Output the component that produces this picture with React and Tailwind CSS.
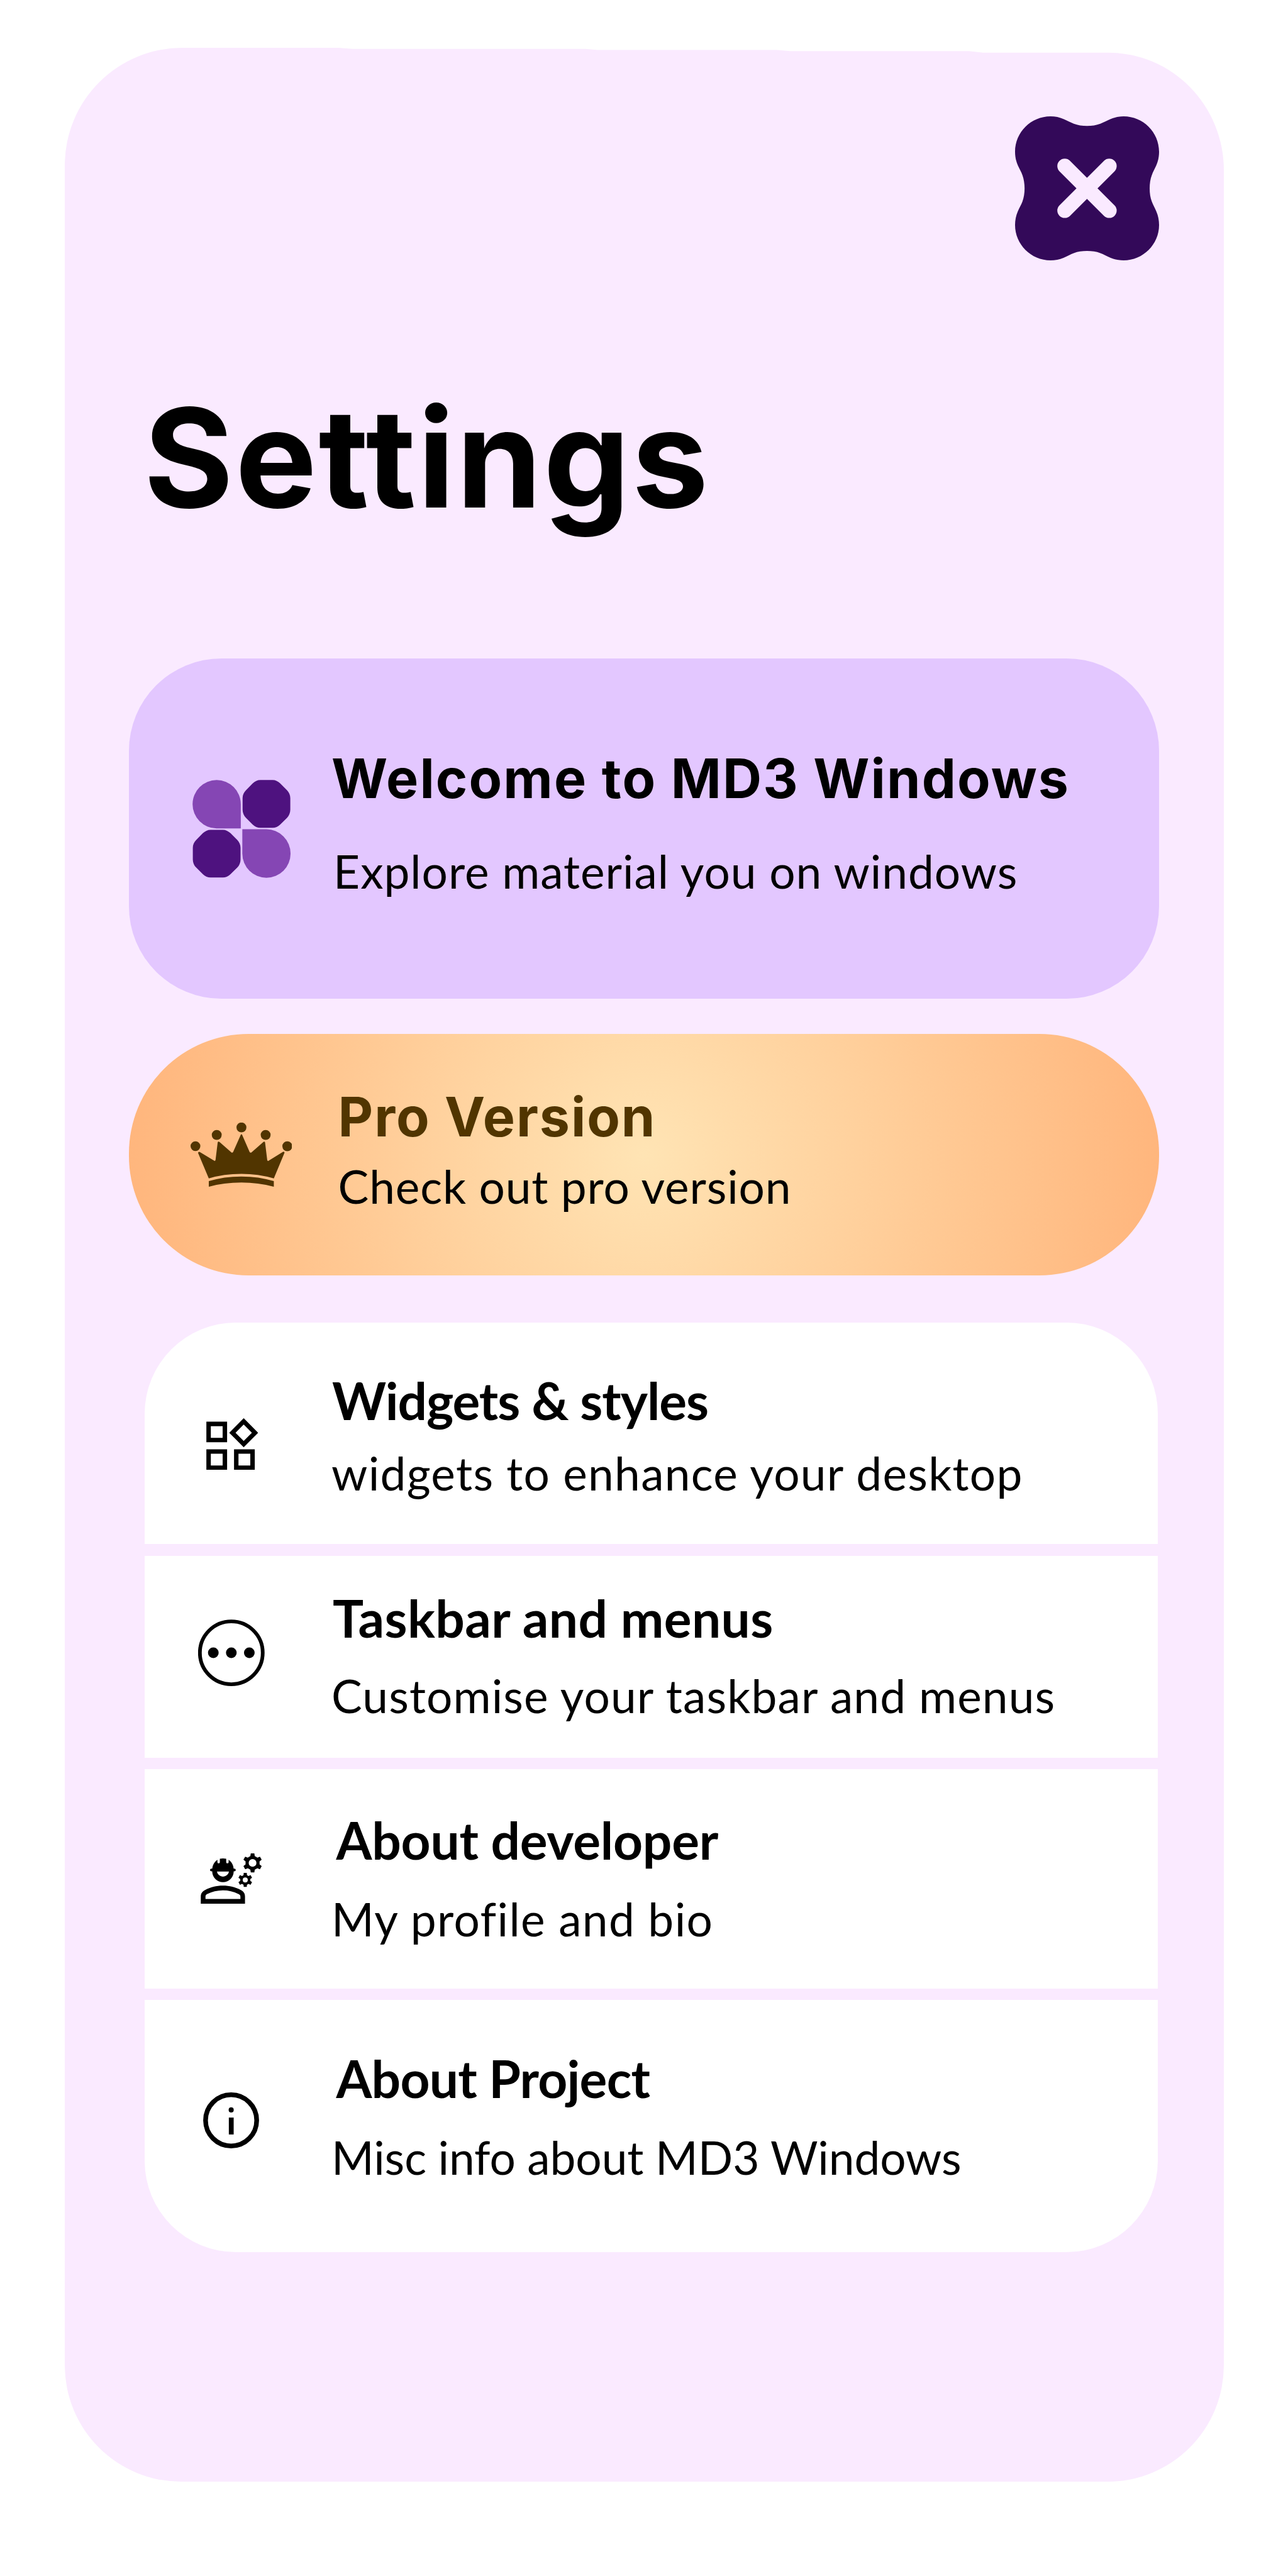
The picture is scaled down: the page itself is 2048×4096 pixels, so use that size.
import React from "react";

function CloseIcon() {
  return (
    <svg viewBox="181 162 1133 1133" className="block h-[229px] w-[229px]">
      <path
        fill="#330959"
        d="M181 440C181 287 307 162 460 162C497 162 532 169 562 183C592 196 618 209 643 220C675 232 710 237 747 237C785 237 820 232 852 220C877 209 903 196 933 183C963 169 998 162 1035 162C1188 162 1314 287 1314 440C1314 478 1307 513 1293 546C1280 575 1266 600 1257 624C1245 655 1240 690 1240 728C1240 767 1245 802 1257 833C1266 857 1280 882 1293 911C1307 944 1314 979 1314 1017C1314 1170 1188 1295 1035 1295C998 1295 963 1288 933 1275C903 1261 877 1248 852 1238C820 1226 785 1221 747 1221C710 1221 675 1226 643 1238C618 1248 592 1261 562 1275C532 1288 497 1295 460 1295C307 1295 181 1170 181 1017C181 979 188 944 202 911C215 882 230 857 239 833C250 802 256 767 256 728C256 690 250 655 239 624C230 600 215 575 202 546C188 513 181 478 181 440Z"
      />
      <path d="M572 553L922 903M922 553L572 903" stroke="#FAEAFF" strokeWidth="117" strokeLinecap="round" />
    </svg>
  );
}

const OCTAGON =
  "M140 0H237C258 0 280 10 297 27L350 80C366 96 376 118 376 142V234C376 258 366 282 350 298L297 350C280 367 258 376 237 376H140C118 376 96 367 79 350L27 298C10 282 0 258 0 234V142C0 118 10 96 27 80L79 27C96 10 118 0 140 0Z";

function LogoIcon() {
  return (
    <svg viewBox="162 189 773 770" className="block h-[156px] w-[156px]">
      <path fill="#8546B4" d="M543 570H352A190 190.500 0 1 1 543 379Z" />
      <path fill="#8546B4" d="M555 577H745A190 191 0 1 1 555 768Z" />
      <path fill="#4E127F" transform="translate(557 189)" d={OCTAGON} />
      <path fill="#4E127F" transform="translate(165 581)" d={OCTAGON} />
    </svg>
  );
}

function CrownIcon() {
  return (
    <svg viewBox="149 125 796 505" className="block h-[102px] w-[161px]">
      <g fill="#513500">
        <circle cx="187" cy="311" r="38.500" />
        <circle cx="354.500" cy="222" r="39" />
        <circle cx="549" cy="163" r="39" />
        <circle cx="739.500" cy="222" r="39" />
        <circle cx="910" cy="311" r="39" />
        <path d="M292 564L208 365Q206 354 221 356L336 426Q342 428 345 420L362 281Q365 272 376 277L472 361Q478 364 483 358L544 220Q549 212 554 220L614 358Q618 364 626 361L722 277Q732 272 735 281L752 420Q753 428 762 426L876 355Q889 351 888 363L804 564Q680 528 549 528Q410 528 292 564Z" />
        <path d="M292 586Q410 549 549 549Q685 549 804 586V630Q680 597 549 597Q410 597 292 630Z" />
      </g>
    </svg>
  );
}

function WidgetsIcon() {
  return (
    <svg viewBox="178 169 407 408" className="block h-[82.500px] w-[82.400px]">
      <g fill="none" stroke="#000" strokeWidth="35">
        <path d="M196 214H324V341H196ZM196 431H324V559H196ZM413.500 431H541.500V559H413.500Z" />
        <path d="M472 194L561 283.500L472 373L383 283.500Z" />
      </g>
    </svg>
  );
}

function DotsIcon() {
  return (
    <svg viewBox="117 133 522 524" className="block h-[106px] w-[105.600px]">
      <circle cx="378" cy="395.500" r="247" fill="none" stroke="#000" strokeWidth="29" />
      <circle cx="236.500" cy="395.500" r="42" />
      <circle cx="378" cy="395.500" r="42" />
      <circle cx="519.500" cy="395.500" r="42" />
    </svg>
  );
}

const TEETH = [0, 60, 120, 180, 240, 300];

function DeveloperIcon() {
  return (
    <svg viewBox="137 171 481 396" className="block h-[80px] w-[97.300px]">
      <path
        fillRule="evenodd"
        d="M228 300C228 265 245 238 269 222V240A9.500 9.500 0 0 0 288 240V213Q312 208 338 213V240A9.500 9.500 0 0 0 357 240V222C381 238 397 265 397 300V313A84.500 84.500 0 0 1 228 313ZM265 313A48 48 0 0 0 360 313Z"
      />
      <rect x="211" y="291" width="202" height="21.500" rx="10.500" />
      <path
        fillRule="evenodd"
        d="M138 567V510C138 485 152 468 172 459C215 437 260 425 312 425C364 425 410 437 453 459C473 468 486 485 486 510V567ZM175 530H450V512C450 500 445 495 436 491C395 471 355 462 312 462C268 462 225 473 187 492C179 496 175 502 175 512Z"
      />
      <g transform="translate(545.500 246)">
        {TEETH.map((a) => (
          <path key={a} transform={`rotate(${a})`} d="M-14 -75H14L19 -44H-19Z" />
        ))}
        <circle r="43" fill="none" stroke="#000" strokeWidth="25" />
      </g>
      <g transform="translate(488 380)">
        {TEETH.map((a) => (
          <path key={a} transform={`rotate(${a})`} d="M-12 -55H12L14 -32H-14Z" />
        ))}
        <circle r="30" fill="none" stroke="#000" strokeWidth="20" />
      </g>
    </svg>
  );
}

function InfoIcon() {
  return (
    <svg viewBox="158 188 440 440" className="block h-[89px] w-[89px]">
      <circle cx="378" cy="408" r="201" fill="none" stroke="#000" strokeWidth="37" />
      <circle cx="378.500" cy="326" r="20" />
      <rect x="360" y="386" width="38" height="133" />
    </svg>
  );
}

function Row({ className, icon, iconPad, title, titleClass, text, textClass }) {
  return (
    <div className={`flex items-start bg-white ${className}`}>
      <div className={`w-[296px] shrink-0 ${iconPad}`}>{icon}</div>
      <div className="whitespace-nowrap font-['Lato',sans-serif]">
        <h2 className={`text-[82px] leading-[98px] font-bold ${titleClass}`}>{title}</h2>
        <p className={`text-[73px] leading-[88px] ${textClass}`}>{text}</p>
      </div>
    </div>
  );
}

export default function App() {
  return (
    <div className="flex h-[4096px] w-[2048px] flex-col bg-white pt-[76px] pl-[103px] text-black">
      <main className="flex h-[3870px] w-[1843px] flex-col bg-[#FAEAFF] [clip-path:path('M0_187A187_187_0_0_1_187_0H435L458_1.8H828L848_3.6H1133L1153_5.3H1438L1460_7.7H1659A184_187_0_0_1_1843_194V3685A185_185_0_0_1_1658_3870H185A185_185_0_0_1_0_3685Z')]">
        <header className="pt-[108.500px]">
          <button type="button" aria-label="Close" className="ml-[1511px] block">
            <CloseIcon />
          </button>
          <h1 className="mt-[182px] ml-[125.500px] font-['Inter',sans-serif] text-[218px] leading-[264px] font-[750] tracking-[2.700px] whitespace-nowrap">
            Settings
          </h1>
        </header>

        <section className="mt-[187px] ml-[102px] flex h-[541.400px] w-[1638px] items-start rounded-[147px] bg-[#E3C7FF]">
          <div className="w-[323px] shrink-0 pt-[193px] pl-[101px]">
            <LogoIcon />
          </div>
          <div className="pt-[139.400px] whitespace-nowrap">
            <h2 className="-ml-[1px] font-['Inter',sans-serif] text-[86px] leading-[104px] font-[660] tracking-[2.100px]">
              Welcome to MD3 Windows
            </h2>
            <p className="mt-[51px] ml-[2px] font-['Lato',sans-serif] text-[73px] leading-[88px] tracking-[0.980px]">
              Explore material you on windows
            </p>
          </div>
        </section>

        <section className="mt-[56.300px] ml-[102px] flex h-[384px] w-[1638px] items-start rounded-[190px] bg-[radial-gradient(circle_farthest-side,#FFE4B4,#FFB67D)]">
          <div className="w-[332.600px] shrink-0 pt-[141px] pl-[98.400px]">
            <CrownIcon />
          </div>
          <div className="pt-[80px] whitespace-nowrap">
            <h2 className="font-['Inter',sans-serif] text-[86px] leading-[104px] font-[660] tracking-[1.900px] text-[#513500]">
              Pro Version
            </h2>
            <p className="mt-[13.500px] font-['Lato',sans-serif] text-[73px] leading-[88px] tracking-[0.860px]">
              Check out pro version
            </p>
          </div>
        </section>

        <section className="mt-[75px] ml-[127px] flex w-[1611px] flex-col gap-[18.500px] overflow-hidden rounded-[145px]">
          <Row
            className="h-[352px]"
            icon={<WidgetsIcon />}
            iconPad="pt-[151.700px] pl-[97.600px]"
            title="Widgets & styles"
            titleClass="mt-[74px] ml-[2px] tracking-[-1.050px]"
            text="widgets to enhance your desktop"
            textClass="mt-[22.600px] ml-[1px] tracking-[1.300px]"
          />
          <Row
            className="h-[321.300px]"
            icon={<DotsIcon />}
            iconPad="pt-[101.800px] pl-[85.200px]"
            title="Taskbar and menus"
            titleClass="mt-[49px] ml-[3px] tracking-[0.400px]"
            text="Customise your taskbar and menus"
            textClass="mt-[31.700px] ml-[1px] tracking-[1.130px]"
          />
          <Row
            className="h-[348.200px]"
            icon={<DeveloperIcon />}
            iconPad="pt-[133.500px] pl-[89.300px]"
            title="About developer"
            titleClass="mt-[63px] ml-[8.500px] tracking-[-0.200px]"
            text="My profile and bio"
            textClass="mt-[32.700px] ml-[1px] tracking-[1.410px]"
          />
          <Row
            className="h-[400.500px]"
            icon={<InfoIcon />}
            iconPad="pt-[146.500px] pl-[93px]"
            title="About Project"
            titleClass="mt-[74.500px] ml-[8.500px] tracking-[-0.750px]"
            text="Misc info about MD3 Windows"
            textClass="mt-[33px] ml-[1px] tracking-[-0.070px]"
          />
        </section>
      </main>
    </div>
  );
}
